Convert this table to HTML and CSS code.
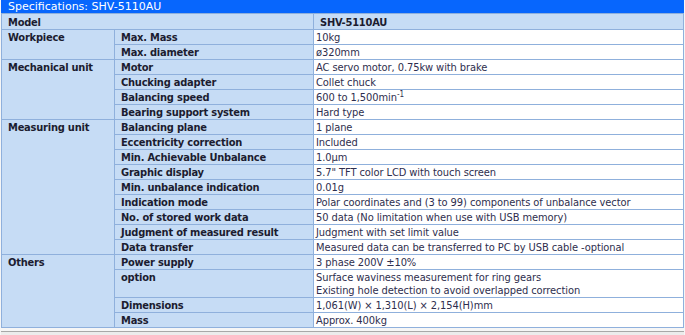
FILE: index.html
```html
<!DOCTYPE html>
<html lang="en">
<head>
    <meta charset="UTF-8">
    <title>Specifications: SHV-5110AU</title>
    <link rel="stylesheet" href="styles.css">
</head>
<body>
    <div class="spec-box">
        <div class="spec-title">Specifications: SHV-5110AU</div>
        <table class="spec-table">
            <colgroup>
                <col class="col-group">
                <col class="col-item">
                <col class="col-value">
            </colgroup>
            <tr class="head-row">
                <th colspan="2">Model</th>
                <th class="value">SHV-5110AU</th>
            </tr>
            <tr>
                <th class="group" rowspan="2">Workpiece</th>
                <th>Max. Mass</th>
                <td>10kg</td>
            </tr>
            <tr>
                <th>Max. diameter</th>
                <td>ø320mm</td>
            </tr>
            <tr>
                <th class="group" rowspan="4">Mechanical unit</th>
                <th>Motor</th>
                <td>AC servo motor, 0.75kw with brake</td>
            </tr>
            <tr>
                <th>Chucking adapter</th>
                <td>Collet chuck</td>
            </tr>
            <tr>
                <th>Balancing speed</th>
                <td>600 to 1,500min<sup>-1</sup></td>
            </tr>
            <tr>
                <th>Bearing support system</th>
                <td>Hard type</td>
            </tr>
            <tr>
                <th class="group" rowspan="9">Measuring unit</th>
                <th>Balancing plane</th>
                <td>1 plane</td>
            </tr>
            <tr>
                <th>Eccentricity correction</th>
                <td>Included</td>
            </tr>
            <tr>
                <th>Min. Achievable Unbalance</th>
                <td>1.0μm</td>
            </tr>
            <tr>
                <th>Graphic display</th>
                <td>5.7" TFT color LCD with touch screen</td>
            </tr>
            <tr>
                <th>Min. unbalance indication</th>
                <td>0.01g</td>
            </tr>
            <tr>
                <th>Indication mode</th>
                <td>Polar coordinates and (3 to 99) components of unbalance vector</td>
            </tr>
            <tr>
                <th>No. of stored work data</th>
                <td>50 data (No limitation when use with USB memory)</td>
            </tr>
            <tr>
                <th>Judgment of measured result</th>
                <td>Judgment with set limit value</td>
            </tr>
            <tr>
                <th>Data transfer</th>
                <td>Measured data can be transferred to PC by USB cable -optional</td>
            </tr>
            <tr>
                <th class="group" rowspan="4">Others</th>
                <th>Power supply</th>
                <td>3 phase 200V ±10%</td>
            </tr>
            <tr>
                <th>option</th>
                <td>Surface waviness measurement for ring gears<br>Existing hole detection to avoid overlapped correction</td>
            </tr>
            <tr>
                <th>Dimensions</th>
                <td>1,061(W) × 1,310(L) × 2,154(H)mm</td>
            </tr>
            <tr>
                <th>Mass</th>
                <td>Approx. 400kg</td>
            </tr>
        </table>
    </div>
    <div class="bottom-bar"></div>
</body>
</html>
```

FILE: styles.css
```css
body {
    margin: 0;
    padding: 0 1px 0 1px;
    background-color: #f6f6f6;
    font-family: "DejaVu Sans Condensed", "DejaVu Sans", sans-serif;
    font-stretch: condensed;
}
.spec-box {
    width: 683px;
}
.spec-title {
    background-color: #0766fd;
    color: #ffffff;
    font-family: "DejaVu Sans", sans-serif;
    font-stretch: normal;
    font-size: 11px;
    line-height: 13px;
    height: 13px;
    padding-left: 7px;
    white-space: nowrap;
    overflow: hidden;
}
.spec-table {
    width: 683px;
    table-layout: fixed;
    border-collapse: collapse;
    background-color: #c6dcf5;
    font-size: 11px;
    line-height: 13px;
}
.col-group {
    width: 113px;
}
.col-item {
    width: 199px;
}
.spec-table th,
.spec-table td {
    border: 1px solid #8fb0dc;
    padding: 1px 4px 0 6px;
    text-align: left;
    vertical-align: top;
    white-space: nowrap;
}
.spec-table th {
    font-weight: bold;
    color: #1c1c30;
    letter-spacing: -0.22px;
}
.spec-table td {
    background-color: #ffffff;
    color: #2e2e4e;
    padding-left: 2px;
    letter-spacing: -0.08px;
}
.head-row th {
    padding-top: 2px;
}
.head-row th.value {
    padding-left: 6px;
}
sup {
    font-size: 8px;
    line-height: 0;
    vertical-align: 4px;
}
.bottom-bar {
    margin-top: 3px;
    border-top: 1px solid #a8a8a8;
    background-color: #ececec;
    height: 10px;
}
```
